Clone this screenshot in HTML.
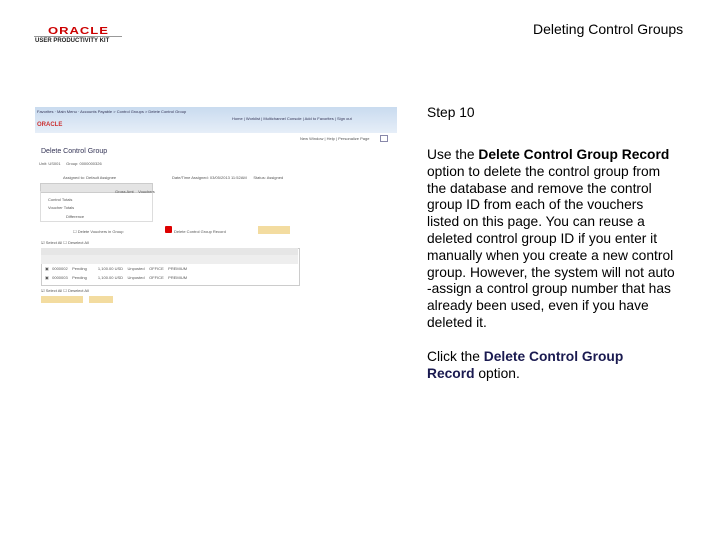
<!DOCTYPE html>
<html><head><style>
body{margin:0;width:720px;height:540px;background:#fff;position:relative;font-family:"Liberation Sans",Arial,sans-serif;overflow:hidden}
.a{position:absolute}
.t{font-size:13.8px;color:#000;line-height:16.8px;white-space:nowrap}
.s{font-size:4px;color:#555;position:absolute;white-space:nowrap}
</style></head><body>
<div class="a" style="left:48px;top:23px;font-size:13px;font-weight:bold;color:#c00;letter-spacing:1px;transform:scaleY(.8)">ORACLE</div>
<div class="a" style="left:34px;top:36px;width:88px;border-top:1px solid #999"></div>
<div class="a" style="left:35px;top:38px;font-size:6px;font-weight:bold;color:#222;white-space:nowrap">USER PRODUCTIVITY KIT</div>
<div class="a t" style="left:533px;top:21px;font-size:14px">Deleting Control Groups</div>

<div class="a" style="left:35px;top:107px;width:362px;height:26px;background:linear-gradient(#c9dbef,#e6eef8)"></div>
<div class="a" style="left:37px;top:122px;font-size:6px;font-weight:bold;color:#c33">ORACLE</div>
<div class="s" style="left:37px;top:109px;color:#335">Favorites · Main Menu · Accounts Payable &gt; Control Groups &gt; Delete Control Group</div>
<div class="s" style="left:232px;top:116px;color:#335">Home | Worklist | Multichannel Console | Add to Favorites | Sign out</div>
<div class="s" style="left:300px;top:136px">New Window | Help | Personalize Page</div>
<div class="a" style="left:380px;top:135px;width:6px;height:5px;border:1px solid #88a"></div>
<div class="a" style="left:41px;top:148px;font-size:7px;color:#335">Delete Control Group</div>
<div class="s" style="left:39px;top:161px">Unit: US001 &nbsp;&nbsp;&nbsp; Group: 0000000326</div>
<div class="s" style="left:63px;top:175px">Assigned to: Default Assignee</div>
<div class="s" style="left:172px;top:175px">Date/Time Assigned: 03/05/2013 11:52AM &nbsp;&nbsp;&nbsp;&nbsp; Status: Assigned</div>
<div class="a" style="left:40px;top:183px;width:111px;height:8px;background:#e4e4e4;border:1px solid #ccc"></div>
<div class="a" style="left:40px;top:191px;width:111px;height:30px;border:1px solid #ddd;border-top:none"></div>
<div class="s" style="left:48px;top:197px">Control Totals</div>
<div class="s" style="left:48px;top:205px">Voucher Totals</div>
<div class="s" style="left:66px;top:214px">Difference</div>
<div class="s" style="left:115px;top:189px">Gross Amt &nbsp;&nbsp; Vouchers</div>
<div class="s" style="left:73px;top:229px">☐ Delete Vouchers in Group</div>
<div class="a" style="left:165px;top:226px;width:7px;height:7px;background:#d00;border-radius:1px"></div>
<div class="s" style="left:174px;top:229px">Delete Control Group Record</div>
<div class="a" style="left:258px;top:226px;width:32px;height:8px;background:#f3dca0"></div>
<div class="s" style="left:41px;top:240px">☑ Select All ☐ Deselect All</div>
<div class="a" style="left:41px;top:248px;width:257px;height:36px;border:1px solid #ccc"></div>
<div class="a" style="left:41px;top:248px;width:257px;height:7px;background:#e6e6e6"></div>
<div class="a" style="left:41px;top:255px;width:257px;height:9px;background:#eee"></div>
<div class="s" style="left:45px;top:266px">▣ &nbsp; 0000002 &nbsp;&nbsp; Pending &nbsp;&nbsp;&nbsp;&nbsp;&nbsp;&nbsp;&nbsp;&nbsp; 1,100.00 USD &nbsp;&nbsp; Unposted &nbsp;&nbsp; OFFICE &nbsp;&nbsp; PREMIUM</div>
<div class="s" style="left:45px;top:275px">▣ &nbsp; 0000003 &nbsp;&nbsp; Pending &nbsp;&nbsp;&nbsp;&nbsp;&nbsp;&nbsp;&nbsp;&nbsp; 1,100.00 USD &nbsp;&nbsp; Unposted &nbsp;&nbsp; OFFICE &nbsp;&nbsp; PREMIUM</div>
<div class="s" style="left:41px;top:288px">☑ Select All ☐ Deselect All</div>
<div class="a" style="left:41px;top:296px;width:42px;height:7px;background:#f3dca0"></div>
<div class="a" style="left:89px;top:296px;width:24px;height:7px;background:#f3dca0"></div>

<div class="a t" style="left:427px;top:105px">Step 10</div>
<div class="a t" style="left:427px;top:147px">Use the <b>Delete Control Group Record</b><br>option to delete the control group from<br>the database and remove the control<br>group ID from each of the vouchers<br>listed on this page. You can reuse a<br>deleted control group ID if you enter it<br>manually when you create a new control<br>group. However, the system will not auto<br>-assign a control group number that has<br>already been used, even if you have<br>deleted it.</div>
<div class="a t" style="left:427px;top:349px">Click the <b style="color:#1a1a50">Delete Control Group</b><br><b style="color:#1a1a50">Record</b> option.</div>
</body></html>
